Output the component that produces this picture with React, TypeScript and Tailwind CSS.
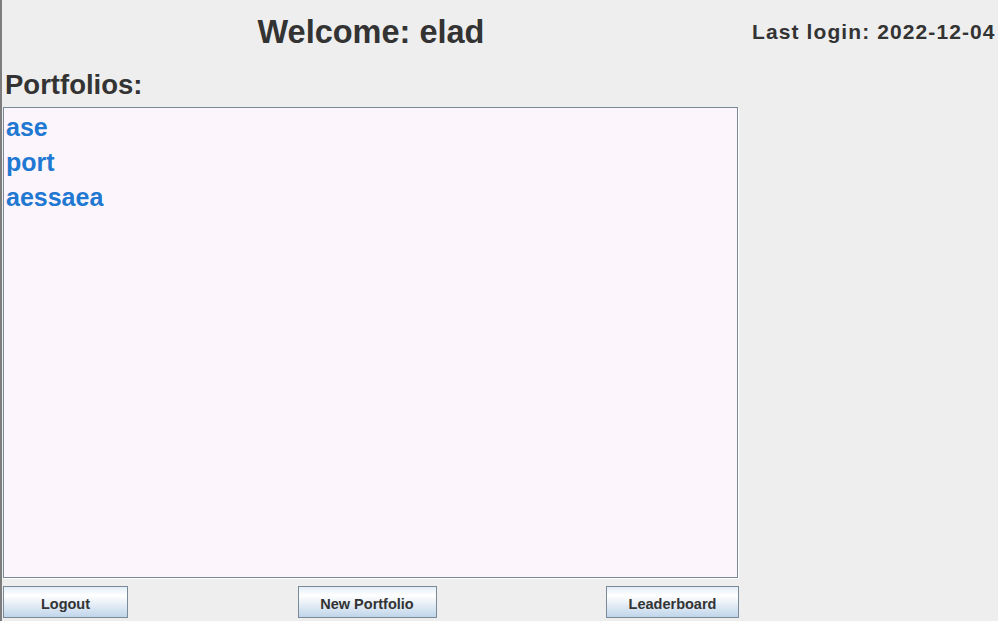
const portfolios = ["ase", "port", "aessaea"];

function SwingButton({ label, width }: { label: string; width: string }) {
  return (
    <button
      className={`${width} flex h-[32px] items-center justify-center border border-[#7a8a99] bg-[linear-gradient(to_bottom,#e3edf6_0%,#ffffff_28%,#c0d5ea_100%)] pt-[5px] text-[14.5px] font-bold text-[#333333]`}
    >
      {label}
    </button>
  );
}

export default function App() {
  return (
    <div className="flex h-[621px] w-[998px] border-l-2 border-[#7d7d7d] bg-[#eeeeee] font-['Liberation_Sans',Arial,sans-serif] text-[#333333]">
      <div className="flex w-[738px] flex-col">
        <div className="mt-[16px] text-center text-[32.5px] font-bold leading-none">
          Welcome: elad
        </div>
        <div className="ml-[3px] mt-[22px] text-[27.5px] font-bold leading-none">
          Portfolios:
        </div>
        <div className="ml-[1px] mt-[9px] h-[471px] w-[735px] border border-[#7a8a99] bg-[#fcf5fc] pl-[2px] pt-[2px] shadow-[1px_1px_0_#ffffff]">
          {portfolios.map((name) => (
            <div
              key={name}
              className="text-[25px] font-bold leading-[35px] text-[#1f78d1]"
            >
              {name}
            </div>
          ))}
        </div>
        <div className="ml-[1px] mt-[8px] flex w-[736px] justify-between">
          <SwingButton label="Logout" width="w-[125px]" />
          <SwingButton label="New Portfolio" width="w-[139px]" />
          <SwingButton label="Leaderboard" width="w-[133px]" />
        </div>
      </div>
      <div className="pl-[12px] pt-[21px]">
        <div className="whitespace-nowrap text-[21px] font-bold leading-none tracking-[1.1px]">
          Last login: 2022-12-04
        </div>
      </div>
    </div>
  );
}
